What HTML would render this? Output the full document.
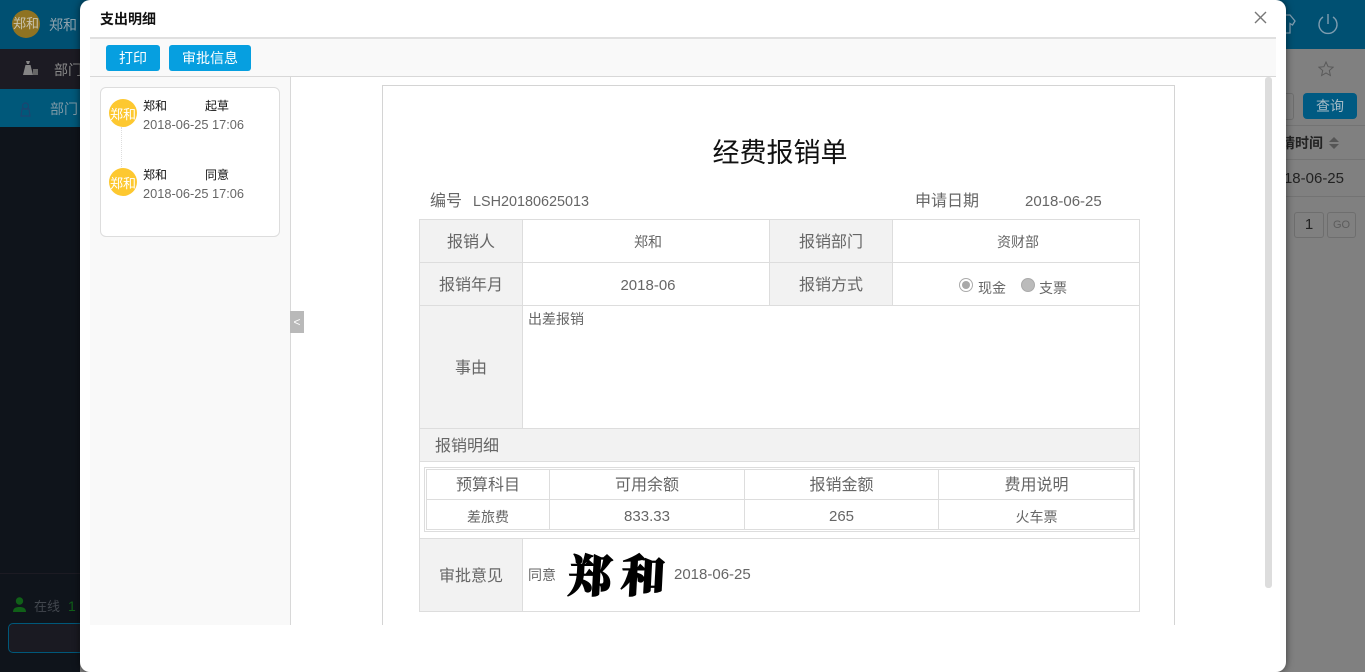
<!DOCTYPE html>
<html lang="zh"><head><meta charset="utf-8"><title>支出明细</title>
<style>
html,body{margin:0;padding:0;width:1365px;height:672px;overflow:hidden;background:#808080}
body{position:relative;font-family:"Liberation Sans","WenQuanYi Zen Hei","Noto Sans CJK SC",sans-serif;color:#555}
div,span{position:absolute;box-sizing:border-box}
.t{white-space:nowrap;line-height:20px}
.c{text-align:center}
.v{background:#ddd;width:1px}
.l{background:#ddd;height:1px}
.g{background:#f2f2f2}
.f15{font-size:16px;color:#666}
.f13{font-size:14px;color:#666}
.d{font-size:15px;color:#666}
.av{width:28px;height:28px;border-radius:50%;background:#fdc830;color:#fff;font-size:13px;line-height:31px;text-align:center;overflow:hidden;white-space:nowrap}
.btn{background:#069fe0;color:#fff;border-radius:3px;font-size:14px;line-height:27px;height:26px;text-align:center;top:45px}
</style></head><body>

<!-- dimmed background -->
<div style="left:0;top:0;width:1365px;height:49px;background:#005072"></div>
<div style="left:0;top:49px;width:80px;height:623px;background:#0f141b"></div>
<div style="left:0;top:49px;width:80px;height:40px;background:#1c1b23"></div>
<div style="left:0;top:89px;width:80px;height:38px;background:#00587a"></div>
<div style="left:0;top:573px;width:80px;height:1px;background:#1c1b23"></div>
<div style="left:12px;top:10px;width:28px;height:28px;border-radius:50%;background:#8f7322;color:#c9c3ae;font-size:13px;line-height:28px;text-align:center;overflow:hidden;white-space:nowrap">郑和</div>
<div class="t" style="left:49px;top:15px;font-size:14px;color:#8fa3ad">郑和</div>
<svg style="position:absolute;left:23px;top:61px" width="15" height="15" viewBox="0 0 15 15"><path d="M3 0h4l-1 3H4zM2.500 4h5L10 14H0z" fill="#858585"/><rect x="10" y="8" width="5" height="6" fill="#666"/></svg>
<div class="t" style="left:54px;top:60px;font-size:14px;color:#888">部门</div>
<svg style="position:absolute;left:18px;top:102px" width="15" height="15" viewBox="0 0 15 15" fill="none" stroke="#1d4570" stroke-width="1.200"><circle cx="7.500" cy="4" r="3"/><path d="M3 14l1-7h7l1 7z"/></svg>
<div class="t" style="left:50px;top:99px;font-size:14px;color:#7d99a6">部门</div>
<svg style="position:absolute;left:12px;top:597px" width="15" height="15" viewBox="0 0 15 15"><circle cx="7.500" cy="4" r="3.700" fill="#106018"/><path d="M1 15c0-4 3-5 6.500-5s6.500 1 6.500 5z" fill="#106018"/></svg>
<div class="t" style="left:34px;top:597px;font-size:13px;color:#42474e">在线</div>
<div class="t" style="left:68px;top:596px;font-size:14px;color:#106018">1</div>
<div style="left:8px;top:623px;width:90px;height:30px;border:1px solid #00587a;border-radius:5px;background:#1a1a22"></div>

<!-- right side of page -->
<svg style="position:absolute;left:1284px;top:10px" width="16" height="24" viewBox="0 0 16 24" fill="none" stroke="#7f9db0" stroke-width="1.300"><path d="M2 5h4l5 6-2.500 4L6 13.500V23H2"/></svg>
<svg style="position:absolute;left:1316px;top:12px" width="24" height="24" viewBox="0 0 24 24" fill="none" stroke="#7f9db0" stroke-width="1.400"><path d="M7 5a9 9 0 1 0 10 0M12 2v10"/></svg>
<svg style="position:absolute;left:1318px;top:61px" width="16" height="16" viewBox="0 0 16 16" fill="none" stroke="#5a5a5a" stroke-width="1"><path d="M8 1l2.100 4.700 5 .5-3.800 3.300 1.100 5L8 12l-4.400 2.500 1.100-5L.9 6.200l5-.5z"/></svg>
<div style="left:1270px;top:93px;width:24px;height:27px;border:1px solid #6e6e6e;border-radius:3px"></div>
<div style="left:1303px;top:93px;width:54px;height:26px;background:#005a82;border-radius:4px;color:#a8bcc7;font-size:14px;line-height:27px;text-align:center">查询</div>
<div style="left:1270px;top:125px;width:95px;height:1px;background:#737373"></div>
<div class="t" style="left:1243px;top:133px;width:80px;text-align:right;font-size:14px;font-weight:bold;color:#222">申请时间</div>
<div style="left:1329px;top:137px;width:0;height:0;border:5px solid transparent;border-top:0;border-bottom:5px solid #555"></div>
<div style="left:1329px;top:144px;width:0;height:0;border:5px solid transparent;border-bottom:0;border-top:5px solid #555"></div>
<div style="left:1270px;top:159px;width:95px;height:1px;background:#737373"></div>
<div class="t" style="left:1244px;top:169px;width:100px;font-size:15px;color:#222;text-align:right">2018-06-25</div>
<div style="left:1270px;top:196px;width:95px;height:1px;background:#737373"></div>
<div style="left:1294px;top:212px;width:30px;height:26px;border:1px solid #6e6e6e;border-radius:3px;color:#222;font-size:15px;line-height:24px;text-align:center">1</div>
<div style="left:1327px;top:212px;width:29px;height:26px;border:1px solid #6e6e6e;border-radius:3px;color:#5c5c5c;font-size:11px;line-height:24px;text-align:center">GO</div>

<!-- modal -->
<div style="left:80px;top:0;width:1206px;height:672px;background:#fff;border-radius:10px;box-shadow:0 0 8px rgba(0,0,0,.55)"></div>
<div class="t" style="left:100px;top:9px;font-size:14px;font-weight:bold;color:#111">支出明细</div>
<svg style="position:absolute;left:1254px;top:11px" width="13" height="13" viewBox="0 0 13 13" stroke="#777" stroke-width="1.400"><path d="M1 1l11 11M12 1L1 12"/></svg>
<div style="left:90px;top:37px;width:1186px;height:2px;background:#e0e0e0"></div>
<div style="left:90px;top:39px;width:1186px;height:37px;background:#f9f9f9"></div>
<div style="left:90px;top:76px;width:1186px;height:1px;background:#d8d8d8"></div>
<div class="btn" style="left:106px;width:54px">打印</div>
<div class="btn" style="left:169px;width:82px">审批信息</div>

<!-- left panel -->
<div style="left:90px;top:77px;width:201px;height:548px;background:#f9f9f9;border-right:1px solid #d8d8d8"></div>
<div style="left:100px;top:87px;width:180px;height:150px;background:#fff;border:1px solid #ddd;border-radius:6px"></div>
<div style="left:121px;top:127px;width:0;height:42px;border-left:1px dotted #ddd"></div>
<div class="av" style="left:109px;top:99px">郑和</div>
<div class="t" style="left:143px;top:96px;font-size:12px;color:#111">郑和</div>
<div class="t" style="left:205px;top:96px;font-size:12px;color:#111">起草</div>
<div class="t" style="left:143px;top:115px;font-size:12.800px;color:#666">2018-06-25 17:06</div>
<div class="av" style="left:109px;top:168px">郑和</div>
<div class="t" style="left:143px;top:165px;font-size:12px;color:#111">郑和</div>
<div class="t" style="left:205px;top:165px;font-size:12px;color:#111">同意</div>
<div class="t" style="left:143px;top:184px;font-size:12.800px;color:#666">2018-06-25 17:06</div>
<div style="left:290px;top:311px;width:14px;height:22px;background:#b9b9b9;color:#fff;font-size:12px;line-height:22px;text-align:center">&lt;</div>

<!-- scrollbar -->
<div style="left:1265px;top:77px;width:7px;height:511px;background:#ddd;border-radius:3px"></div>

<!-- document -->
<div style="left:382px;top:85px;width:793px;height:540px;border:1px solid #d4d4d4;border-bottom:0"></div>
<div class="t c" style="left:382px;top:136px;width:796px;font-size:27px;line-height:34px;color:#111">经费报销单</div>
<div class="t f15" style="left:430px;top:192px">编号</div>
<div class="t" style="left:473px;top:192px;font-size:14.400px;color:#666">LSH20180625013</div>
<div class="t f15" style="left:915px;top:192px">申请日期</div>
<div class="t d" style="left:1025px;top:192px">2018-06-25</div>

<!-- table shading -->
<div class="g" style="left:420px;top:220px;width:102px;height:208px"></div>
<div class="g" style="left:770px;top:220px;width:122px;height:85px"></div>
<div class="g" style="left:420px;top:429px;width:719px;height:32px"></div>
<div class="g" style="left:420px;top:539px;width:102px;height:72px"></div>
<!-- lines -->
<div class="l" style="left:419px;top:219px;width:721px"></div>
<div class="l" style="left:419px;top:262px;width:721px"></div>
<div class="l" style="left:419px;top:305px;width:721px"></div>
<div class="l" style="left:419px;top:428px;width:721px"></div>
<div class="l" style="left:419px;top:461px;width:721px"></div>
<div class="l" style="left:419px;top:538px;width:721px"></div>
<div class="l" style="left:419px;top:611px;width:721px"></div>
<div class="v" style="left:419px;top:219px;height:393px"></div>
<div class="v" style="left:1139px;top:219px;height:393px"></div>
<div class="v" style="left:522px;top:219px;height:209px"></div>
<div class="v" style="left:522px;top:538px;height:73px"></div>
<div class="v" style="left:769px;top:219px;height:86px"></div>
<div class="v" style="left:892px;top:219px;height:86px"></div>

<div class="t c f15" style="left:420px;top:233px;width:102px">报销人</div>
<div class="t c f13" style="left:523px;top:232px;width:250px">郑和</div>
<div class="t c f15" style="left:770px;top:233px;width:122px">报销部门</div>
<div class="t c f13" style="left:893px;top:232px;width:250px">资财部</div>
<div class="t c f15" style="left:420px;top:276px;width:102px">报销年月</div>
<div class="t c d" style="left:523px;top:276px;width:250px">2018-06</div>
<div class="t c f15" style="left:770px;top:276px;width:122px">报销方式</div>
<div style="left:959px;top:278px;width:14px;height:14px;border-radius:50%;border:1px solid #aaa;background:#fff"></div>
<div style="left:962px;top:281px;width:8px;height:8px;border-radius:50%;background:#a8a8a8"></div>
<div class="t f13" style="left:978px;top:278px">现金</div>
<div style="left:1021px;top:278px;width:14px;height:14px;border-radius:50%;border:1px solid #aaa;background:#bbb"></div>
<div class="t f13" style="left:1039px;top:278px">支票</div>
<div class="t c f15" style="left:420px;top:359px;width:102px">事由</div>
<div class="t f13" style="left:528px;top:309px">出差报销</div>
<div class="t f15" style="left:435px;top:437px">报销明细</div>

<!-- nested table -->
<div style="left:424px;top:467px;width:711px;height:65px;border:1px solid #ddd"></div>
<div style="left:426px;top:469px;width:708px;height:61px;border:1px solid #ddd"></div>
<div class="l" style="left:426px;top:499px;width:708px"></div>
<div class="v" style="left:549px;top:469px;height:61px"></div>
<div class="v" style="left:744px;top:469px;height:61px"></div>
<div class="v" style="left:938px;top:469px;height:61px"></div>
<div class="t c f15" style="left:427px;top:476px;width:122px">预算科目</div>
<div class="t c f15" style="left:550px;top:476px;width:194px">可用余额</div>
<div class="t c f15" style="left:745px;top:476px;width:193px">报销金额</div>
<div class="t c f15" style="left:939px;top:476px;width:195px">费用说明</div>
<div class="t c f13" style="left:427px;top:507px;width:122px">差旅费</div>
<div class="t c d" style="left:550px;top:507px;width:194px">833.33</div>
<div class="t c d" style="left:745px;top:507px;width:193px">265</div>
<div class="t c f13" style="left:939px;top:507px;width:195px">火车票</div>

<div class="t c f15" style="left:420px;top:567px;width:102px">审批意见</div>
<div class="t f13" style="left:528px;top:565px">同意</div>
<div class="t" style="left:568px;top:544px;font-family:'Noto Serif CJK SC',serif;font-weight:900;font-size:45px;line-height:58px;color:#000;letter-spacing:8px;-webkit-text-stroke:1px #000;transform:skewX(-3deg)">郑和</div>
<div class="t d" style="left:674px;top:565px">2018-06-25</div>
</body></html>
